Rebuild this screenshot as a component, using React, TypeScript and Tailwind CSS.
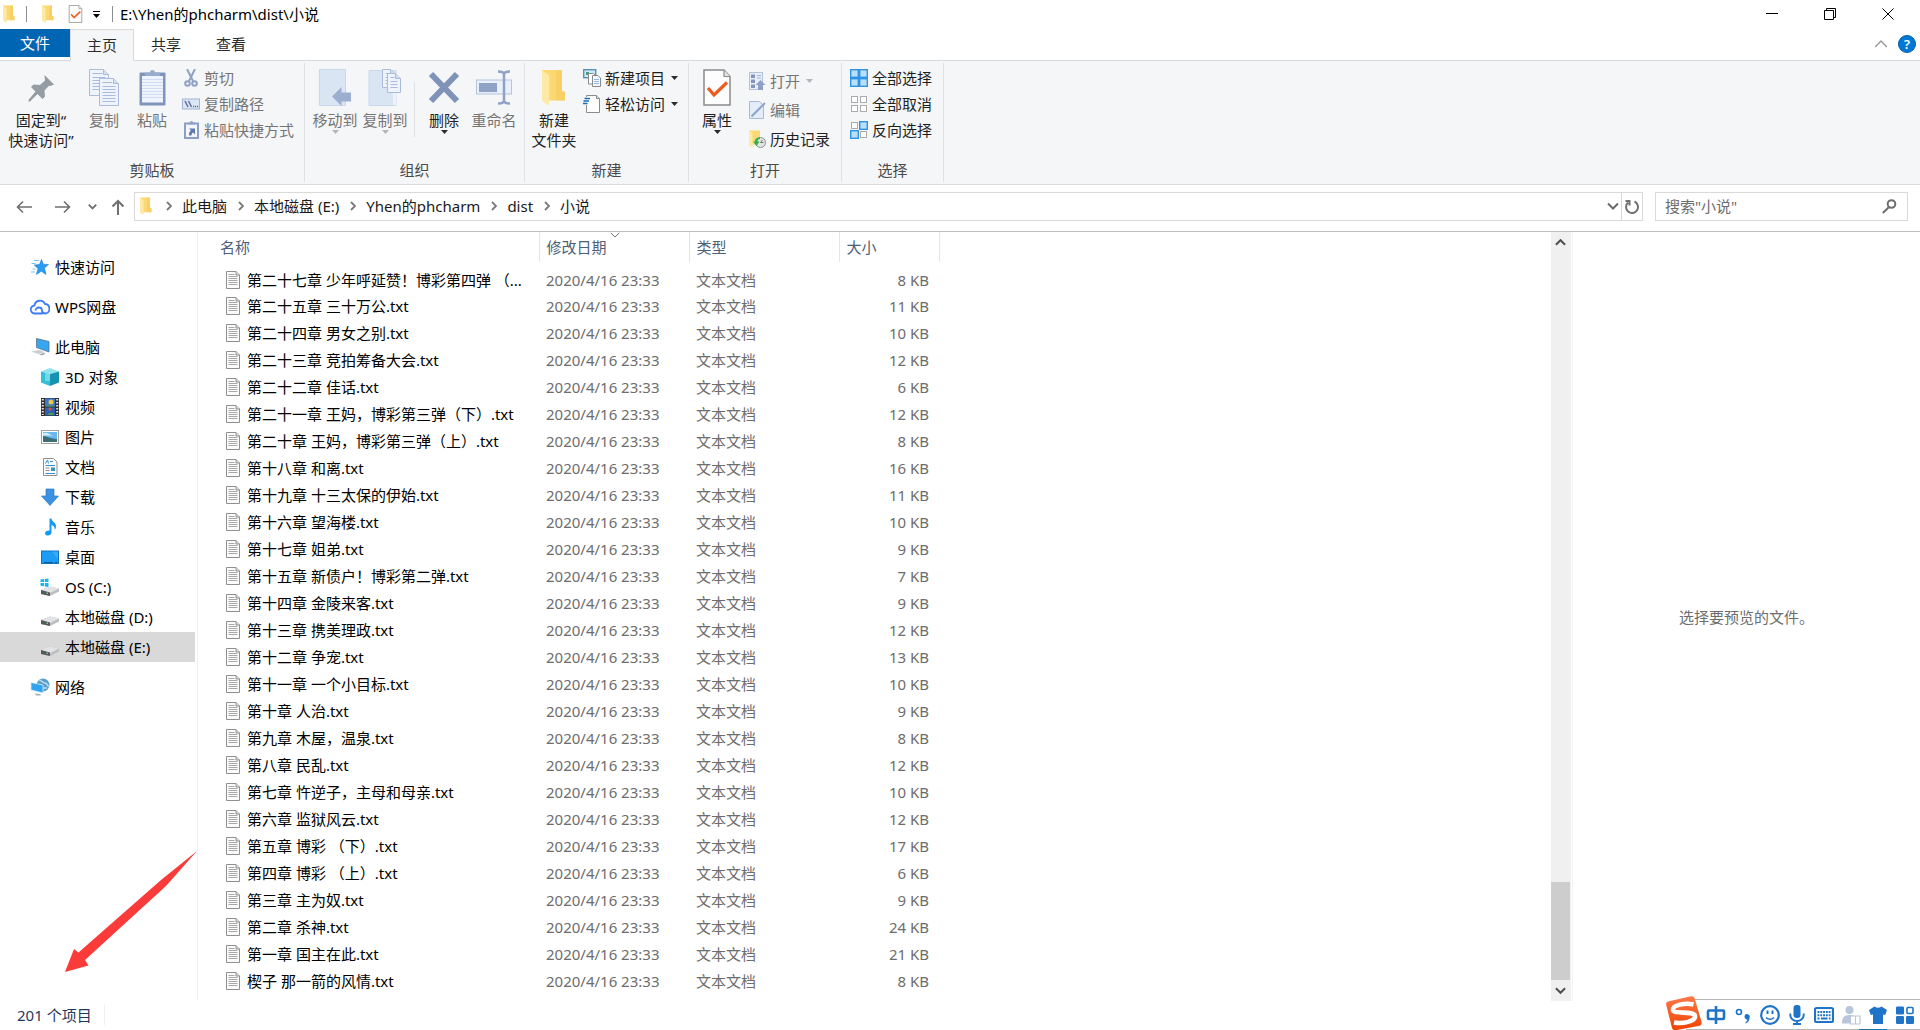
import React from "react";

type IconProps = { className?: string };

const files: [string, string][] = [
  ["第二十七章 少年呼延赞！博彩第四弹 （...", "8 KB"],
  ["第二十五章 三十万公.txt", "11 KB"],
  ["第二十四章 男女之别.txt", "10 KB"],
  ["第二十三章 竞拍筹备大会.txt", "12 KB"],
  ["第二十二章 佳话.txt", "6 KB"],
  ["第二十一章 王妈，博彩第三弹（下）.txt", "12 KB"],
  ["第二十章 王妈，博彩第三弹（上）.txt", "8 KB"],
  ["第十八章 和离.txt", "16 KB"],
  ["第十九章 十三太保的伊始.txt", "11 KB"],
  ["第十六章 望海楼.txt", "10 KB"],
  ["第十七章 姐弟.txt", "9 KB"],
  ["第十五章 新债户！博彩第二弹.txt", "7 KB"],
  ["第十四章 金陵来客.txt", "9 KB"],
  ["第十三章 携美理政.txt", "12 KB"],
  ["第十二章 争宠.txt", "13 KB"],
  ["第十一章 一个小目标.txt", "10 KB"],
  ["第十章 人治.txt", "9 KB"],
  ["第九章 木屋，温泉.txt", "8 KB"],
  ["第八章 民乱.txt", "12 KB"],
  ["第七章 忤逆子，主母和母亲.txt", "10 KB"],
  ["第六章 监狱风云.txt", "12 KB"],
  ["第五章 博彩 （下）.txt", "17 KB"],
  ["第四章 博彩 （上）.txt", "6 KB"],
  ["第三章 主为奴.txt", "9 KB"],
  ["第二章 杀神.txt", "24 KB"],
  ["第一章 国主在此.txt", "21 KB"],
  ["楔子 那一箭的风情.txt", "8 KB"],
];

/* ---------- icons ---------- */

function Folder({ className }: IconProps) {
  return (
    <svg className={className} viewBox="0 0 12 18" preserveAspectRatio="none" aria-hidden="true">
      <path d="M0 0.500h10v10l1.500 0.800v4H0z" fill="#fbd874" />
      <path d="M7 0.500h3v10l1.500 0.800v4H7z" fill="#f6cb5b" opacity="0.600" />
      <path d="M0 0.500L3.600 3.200V18L0 15.500z" fill="#ffe9a6" />
    </svg>
  );
}

function CheckDoc({ className }: IconProps) {
  return (
    <svg className={className} viewBox="0 0 28 37" aria-hidden="true">
      <path d="M1 1h20l6 6.500v28.500H1z" fill="#fdfdfd" stroke="#8a8a8a" strokeWidth="1.500" />
      <path d="M21 1v6.500h6" fill="#e5e5e5" stroke="#8a8a8a" strokeWidth="1.200" />
      <path d="M5 19l6 7L24 13.500" fill="none" stroke="#ee5a1c" strokeWidth="3.200" />
    </svg>
  );
}

function Pin() {
  return (
    <svg className="h-[37px] w-7" viewBox="0 0 28 37" aria-hidden="true">
      <path d="M17.500 6L27 15.500l-3.500 1.500-1.500-0.300-4.500 4.800 0.500 6-2.500 2.500-5-5L3 32.500H1.500V31L8.500 22.500 4 18l2.500-2.500 6.500 0.500L18 11.500z" fill="#949da3" />
    </svg>
  );
}

function PageShape({ x, y, w, h }: { x: number; y: number; w: number; h: number }) {
  const lines = [];
  for (let ly = y + 8; ly < y + h - 3; ly += 3) lines.push(ly);
  return (
    <g>
      <path d={`M${x} ${y}h${w - 5}l5 5v${h - 5}h-${w}z`} fill="#eef3fc" stroke="#aabbdc" />
      <path d={`M${x + w - 5} ${y}v5h5`} fill="#d6e0f2" stroke="#aabbdc" />
      <path d={`M${x + 3} ${y + 4}h${w - 9}`} stroke="#a9bbe0" />
      {lines.map((ly) => (
        <path key={ly} d={`M${x + 3} ${ly}h${w - 6}`} stroke="#a9bbe0" />
      ))}
    </g>
  );
}

function CopyIcon() {
  return (
    <svg className="h-[37px] w-[31px]" viewBox="0 0 31 37" aria-hidden="true">
      <PageShape x={0.5} y={0.5} w={19} h={26} />
      <PageShape x={10.5} y={9.5} w={19} h={27} />
    </svg>
  );
}

function Clipboard({ className }: IconProps) {
  return (
    <svg className={className} viewBox="0 0 27 37" aria-hidden="true">
      <rect x="0.500" y="3.500" width="26" height="33" rx="1" fill="#8093bb" />
      <rect x="3" y="7" width="21" height="26.500" fill="#eef3fc" />
      <path d="M3 10.500h21M3 13.500h21M3 16.500h21M3 19.500h21M3 22.500h21M3 25.500h21M3 28.500h21" stroke="#cfdcf2" />
      <path d="M6 7V3.500h5a2.500 2.500 0 0 1 5 0h5V7z" fill="#9aabcd" />
    </svg>
  );
}

function CutIcon() {
  return (
    <svg className="h-[18px] w-[18px]" viewBox="0 0 18 18" fill="none" stroke="#8fa1c4" aria-hidden="true">
      <path d="M5 0L11 12M13 0L7 12" strokeWidth="2" />
      <circle cx="5.500" cy="14.500" r="2.300" strokeWidth="2" />
      <circle cx="12.500" cy="14.500" r="2.300" strokeWidth="2" />
    </svg>
  );
}

function PathIcon() {
  return (
    <svg className="h-[18px] w-[18px]" viewBox="0 0 18 18" aria-hidden="true">
      <rect x="0.500" y="4" width="17" height="10" fill="#dce6f6" stroke="#a3b3d3" />
      <path d="M3 6l3 6M6.500 6l3 6" stroke="#5f7397" strokeWidth="1.500" />
      <path d="M11 11.500h1.200M13 11.500h1.200M15 11.500h1.200" stroke="#5f7397" strokeWidth="1.500" />
    </svg>
  );
}

function PasteShortcut() {
  return (
    <svg className="h-[18px] w-[18px]" viewBox="0 0 18 18" aria-hidden="true">
      <rect x="3" y="2.500" width="13" height="14.500" fill="#f3f7fd" stroke="#8b9fc6" strokeWidth="2" />
      <path d="M6 3.500V1.500h2a1.500 1.500 0 0 1 3 0h2v2z" fill="#8fa1c4" />
      <path d="M7 14.500c0-3 0.500-4 2-5L7 7.500h6v6l-2-2c-1 0.500-1.500 1.500-1.500 3z" fill="#6279a8" />
    </svg>
  );
}

function MoveTo() {
  return (
    <svg className="h-[37px] w-8" viewBox="0 0 32 37" aria-hidden="true">
      <path d="M0.500 0.500h26v36h-26z" fill="#dae5f4" stroke="#cbd7ea" />
      <path d="M13 27.500L22.500 18v5.500H32v9h-9.500V37z" fill="#9dafd0" />
    </svg>
  );
}

function CopyTo() {
  return (
    <svg className="h-[37px] w-[34px]" viewBox="0 0 34 37" aria-hidden="true">
      <path d="M1 1.500h27v35H1z" fill="#dae5f4" stroke="#cbd7ea" />
      <path d="M25 22v14h3V24z" fill="#eef3fa" />
      <PageShape x={14.5} y={0.5} w={13} h={18} />
      <PageShape x={19.5} y={4.5} w={13} h={19} />
    </svg>
  );
}

function DeleteIcon() {
  return (
    <svg className="h-[37px] w-8" viewBox="0 0 32 37" aria-hidden="true">
      <path d="M3 5L29 32M29 5L3 32" stroke="#7f93b9" strokeWidth="6" />
    </svg>
  );
}

function RenameIcon() {
  return (
    <svg className="h-[37px] w-[37px]" viewBox="0 0 37 37" aria-hidden="true">
      <rect x="0.500" y="11" width="35" height="14" fill="#eaf0fa" stroke="#b4c3df" />
      <rect x="3" y="14" width="18" height="9" fill="#8fa3c7" />
      <path d="M22 2.500c4 0 6 0.500 6 3v26c0 2.500-2 3-6 3M34 2.500c-4 0-6 0.500-6 3v26c0 2.500 2 3 6 3" fill="none" stroke="#8fa1c4" strokeWidth="2.500" />
    </svg>
  );
}

function NewItem() {
  return (
    <svg className="h-[18px] w-[18px]" viewBox="0 0 18 18" aria-hidden="true">
      <rect x="0.700" y="0.700" width="12" height="8" fill="#cfe9fa" stroke="#5690b4" strokeWidth="1.400" />
      <rect x="3" y="3" width="3" height="3" fill="#3f9f7a" />
      <path d="M5.500 4.500h5l2.500 2.500v8H5.500z" fill="#fff" stroke="#8a8a8a" />
      <path d="M9.500 6.500h5.500l2.500 2.500v8.500H9.500z" fill="#f4f9ff" stroke="#8a8a8a" />
      <path d="M11 10.500h5M11 12.500h5M11 14.500h5" stroke="#8db8ea" />
    </svg>
  );
}

function EasyAccess() {
  return (
    <svg className="h-[18px] w-[18px]" viewBox="0 0 18 18" aria-hidden="true">
      <path d="M3.500 0.500h10l3 3V17.500H3.500z" fill="#fff" stroke="#8a8a8a" />
      <path d="M13.500 0.500v3h3" fill="#ddd" stroke="#8a8a8a" />
      <rect x="0" y="2" width="5" height="8" fill="#f5f6f8" />
      <path d="M1.500 3.500H7M0.500 6H6M0 8.500H4.500" stroke="#1b6db8" strokeWidth="1.400" />
    </svg>
  );
}

function OpenIcon() {
  return (
    <svg className="h-[18px] w-[18px]" viewBox="0 0 18 18" aria-hidden="true">
      <rect x="1.500" y="0.500" width="13" height="17" fill="#e9eff9" stroke="#b4c2dc" />
      <path d="M3 2.500h4v3.500H3zM3 7.500h4V11H3zM3 12.500h4V16H3z" fill="#8296bd" />
      <path d="M9 3.500h4M9 6h4" stroke="#9fb0d0" />
      <path d="M12.500 8l5 5h-2.500v5h-5v-5H7.500z" fill="#8da0c5" />
    </svg>
  );
}

function EditIcon() {
  return (
    <svg className="h-[18px] w-[18px]" viewBox="0 0 18 18" aria-hidden="true">
      <path d="M1.500 0.500h10l4 4v13h-14z" fill="#e3ecf9" stroke="#a9bad9" />
      <path d="M3.500 15.500L17 2" stroke="#8ea3cb" strokeWidth="2" />
    </svg>
  );
}

function HistoryIcon() {
  return (
    <svg className="h-[18px] w-[18px]" viewBox="0 0 18 18" aria-hidden="true">
      <path d="M1 0.500h11v14H1z" fill="#fbd874" />
      <path d="M1 0.500l3.500 2.500V18L1 15.500z" fill="#ffe9a6" />
      <circle cx="12.500" cy="12.500" r="5" fill="#e3e3e3" stroke="#909090" />
      <path d="M14.500 10l-2 2.500h3" fill="none" stroke="#777" />
      <path d="M12 7.500c-4 0-5 2-5 4H5l3.500 4.500 3-4.500H9.500c0-1.500 0.500-2.500 2.500-2.500z" fill="#2fb14c" />
    </svg>
  );
}

function SelectIcon({ on }: { on: boolean[] }) {
  const cells = [[1, 1], [10, 1], [1, 10], [10, 10]];
  return (
    <svg className="h-[18px] w-[18px]" viewBox="0 0 18 18" aria-hidden="true">
      {cells.map(([x, y], i) =>
        on[i] ? (
          <rect key={i} x={x - 0.3} y={y - 0.3} width="7.600" height="7.600" fill="#b9dffb" stroke="#2f93e4" strokeWidth="1.400" />
        ) : (
          <rect key={i} x={x + 0.5} y={y + 0.5} width="6" height="6" fill="#fff" stroke="#ababab" />
        ),
      )}
    </svg>
  );
}

function TextFile() {
  return (
    <svg className="h-[18px] w-[14px] shrink-0" viewBox="0 0 14 18" aria-hidden="true">
      <path d="M0.500 0.500h9.500l3.500 3.500v13.500h-13z" fill="#fbfbfb" stroke="#8f8f8f" />
      <path d="M10 0.500v3.500h3.500" fill="#ddd" stroke="#8f8f8f" />
      <path d="M2.500 3.500h6M2.500 5.500h9M2.500 7.500h9M2.500 9.500h9M2.500 11.500h9M2.500 13.500h9" stroke="#a8a8a8" />
    </svg>
  );
}

function Chevron({ d, className, width = 1.5 }: { d: "up" | "down" | "right"; className: string; width?: number }) {
  const path = d === "up" ? "M1 8.500L6 3.500l5 5" : d === "down" ? "M1 3.500L6 8.500l5-5" : "M4 2l4 4-4 4";
  return (
    <svg className={className} viewBox="0 0 12 12" fill="none" stroke="currentColor" strokeWidth={width} aria-hidden="true">
      <path d={path} />
    </svg>
  );
}

function Caret({ className = "text-[#2b2b2b]" }: IconProps) {
  return (
    <svg className={`h-1 w-[7px] ${className}`} viewBox="0 0 7 4" aria-hidden="true">
      <path d="M0 0h7L3.500 4z" fill="currentColor" />
    </svg>
  );
}

function NavIcon({ kind }: { kind: string }) {
  return (
    <svg className="h-[18px] w-5 shrink-0" viewBox="0 0 20 18" aria-hidden="true">
      {kind === "star" && (
        <>
          <path d="M11.500 1.500l1.800 4.700 5.200 0.300-4 3.600 1.500 6.400-4.700-3.200-5 3.200 1.800-5.800-3.800-3.700 5.200-0.500z" fill="#2b9af0" stroke="#1d7fd0" strokeWidth="0.600" />
          <path d="M4 2.500h5M1.500 5.500h4M2.500 11h3M1 14h4" stroke="#7cc3f5" strokeWidth="1.200" />
        </>
      )}
      {kind === "cloud" && (
        <path d="M12.500 15.500H5A4 4 0 0 1 4.500 7.500 5.500 5.500 0 0 1 15 6a4.800 4.800 0 0 1 0.500 9.500c-3 0-3.500-1.500-3.500-3s-1-3-3-3-3.500 1.500-3.500 3" fill="none" stroke="#3d7cf5" strokeWidth="1.800" />
      )}
      {kind === "pc" && (
        <>
          <path d="M6.500 0.500l12.500 3v10.500L6.500 9.500z" fill="#35a6ef" stroke="#5b7288" strokeWidth="0.800" />
          <path d="M1 13.500l8-1.500 5.500 2-6 2z" fill="#c9ced2" />
          <path d="M9 16.500l5-2 1.500 1.500-4 1.500z" fill="#aab0b5" />
        </>
      )}
      {kind === "cube" && (
        <>
          <path d="M10 0l9 3.500L10 6 1 3.500z" fill="#8fe3ef" />
          <path d="M1 3.500L10 6v12L1 14.500z" fill="#35bfd6" />
          <path d="M19 3.500L10 6v12l9-3.500z" fill="#1494b0" />
          <path d="M5 5h5v8H5z" fill="#9de8f2" opacity="0.600" />
        </>
      )}
      {kind === "video" && (
        <>
          <rect x="1" width="18" height="18" fill="#2f2f2f" />
          <path d="M2.800 1v16M17.200 1v16" stroke="#e4e4e4" strokeWidth="2" strokeDasharray="1.500 1.500" />
          <rect x="5" y="0.500" width="10" height="8" fill="#3a77d2" />
          <rect x="5" y="9.500" width="10" height="8" fill="#315fb5" />
          <circle cx="11" cy="4" r="2.500" fill="#f0c53c" />
          <path d="M6 8.500c1-3 3-2 4-1s3-1 5 1zM8 17c0-3 6-3 6 0z" fill="#4d9c48" />
          <circle cx="10" cy="11" r="1.500" fill="#e3532f" />
        </>
      )}
      {kind === "picture" && (
        <>
          <rect x="1.500" y="2.500" width="17" height="13" fill="#fff" stroke="#a0a0a0" />
          <rect x="3" y="4" width="14" height="10" fill="#6bb8ef" />
          <path d="M3 8c4 0 8 3 14 3v3H3z" fill="#3a6f76" />
          <path d="M3 5.500c4-2 6 1 10 2H3z" fill="#d8effc" />
        </>
      )}
      {kind === "doc" && (
        <>
          <path d="M3.500 0.500h10l3.500 3.500v13.500H3.500z" fill="#fbfbfb" stroke="#8f8f8f" />
          <path d="M5.500 5.500l2-3.500 1 3.500M10 3.500h3M5.500 7.500h9.500M5.500 15.500h9.500" fill="none" stroke="#2d93d8" />
          <path d="M5.500 10h4M5.500 12.500h4" stroke="#8f8f8f" />
          <rect x="11" y="9.500" width="4" height="3.500" fill="#3f8fbd" />
        </>
      )}
      {kind === "download" && <path d="M6 1h8v7h4.500L10 17.500 1.500 8H6z" fill="#3b92e0" stroke="#2b7cc6" strokeWidth="0.700" />}
      {kind === "music" && (
        <path d="M9.500 0.500h2c0.500 3.500 4.500 4 4.500 7.500 0 1.500-0.500 3-1.200 4 0-3-1.300-4.500-3.300-5v7.500c0 2-1.800 3-3.500 3s-3-0.800-3-2.300 2-3 4.500-2.700z" fill="#159bf3" />
      )}
      {kind === "desktop" && (
        <>
          <rect x="1.500" y="3" width="17" height="12.500" fill="#1d9cf5" stroke="#1473bd" />
          <path d="M12 3.500h6v8z" fill="#4bb5fa" opacity="0.600" />
          <path d="M4 14.500h9M15 14.500h2" stroke="#0e5c9c" />
        </>
      )}
      {(kind === "disk" || kind === "os") && (
        <>
          <path d="M1 12l9-3.500 9 2v3l-9 4.500-9-2z" fill="#bdbec2" />
          <path d="M1 12l9-3.500 9 2-9 4.500z" fill="#e2e3e6" />
          <path d="M1 12l9 2.500V18l-9-2z" fill="#55585c" />
          <rect x="6.500" y="14.500" width="1.500" height="1.500" fill="#5de06d" />
        </>
      )}
      {kind === "os" && (
        <>
          <path d="M0 0h9.500v9H0z" fill="#fff" />
          <path d="M0.500 1.500L4 1v3H0.500zM4.800 0.900L8.500 0.400V4H4.800zM0.500 5H4v3.200L0.500 7.700zM4.800 5H8.500v4l-3.700-0.500z" fill="#1ab5f1" />
        </>
      )}
      {kind === "network" && (
        <>
          <circle cx="13" cy="7" r="6.500" fill="#5a9fc9" />
          <path d="M9 2c3 0 3 3 6 3s2 4 4 3M11 12c1-3 4-2 6-2" stroke="#b8dcef" strokeWidth="1.500" fill="none" />
          <path d="M1 4.500l12 2.500v8L1 12z" fill="#2fa4f0" stroke="#e9f4fb" strokeWidth="0.700" />
          <path d="M5 15.500l5 0.500 1 1.500H6z" fill="#a9b0b5" />
        </>
      )}
    </svg>
  );
}

/* ---------- ribbon parts ---------- */

function Group({ label, children }: { label: string; children: React.ReactNode }) {
  return (
    <section className="mt-[2px] mb-[2px] flex flex-col border-r border-[#dfe1e4]">
      <div className="flex flex-1">{children}</div>
      <h2 className="pb-[2px] text-center leading-5 text-[#4a4a4a]">{label}</h2>
    </section>
  );
}

function Big({ icon, lines, width, muted, caret }: { icon: React.ReactNode; lines: string[]; width: string; muted?: boolean; caret?: boolean }) {
  return (
    <button type="button" className={`flex flex-col items-center pt-[6px] ${width} ${muted ? "text-[#757575]" : "text-[#1f1f1f]"}`}>
      {icon}
      <span className="mt-1 flex flex-col items-center leading-5 whitespace-nowrap">
        {lines.map((l) => (
          <span key={l}>{l}</span>
        ))}
      </span>
      {caret && <Caret className={muted ? "text-[#b5b5b5]" : "text-[#2b2b2b]"} />}
    </button>
  );
}

function Small({ icon, label, muted, caret }: { icon: React.ReactNode; label: string; muted?: boolean; caret?: boolean }) {
  return (
    <button type="button" className={`flex items-center gap-1 leading-5 whitespace-nowrap ${muted ? "text-[#757575]" : "text-[#1f1f1f]"}`}>
      {icon}
      <span>{label}</span>
      {caret && (
        <span className="ml-[2px]">
          <Caret className={muted ? "text-[#b5b5b5]" : "text-[#2b2b2b]"} />
        </span>
      )}
    </button>
  );
}

function Ribbon() {
  return (
    <div className="flex h-[125px] border-y border-[#d9dadc] bg-[#f5f6f8]">
      <Group label="剪贴板">
        <Big icon={<Pin />} lines={["固定到“", "快速访问”"]} width="w-[82px]" />
        <Big icon={<CopyIcon />} lines={["复制"]} width="w-11" muted />
        <Big icon={<Clipboard className="h-[37px] w-[27px]" />} lines={["粘贴"]} width="w-[52px]" muted />
        <div className="flex flex-col gap-[6px] pt-[5px] pr-[10px] pl-1">
          <Small icon={<CutIcon />} label="剪切" muted />
          <Small icon={<PathIcon />} label="复制路径" muted />
          <Small icon={<PasteShortcut />} label="粘贴快捷方式" muted />
        </div>
      </Group>
      <Group label="组织">
        <div className="flex px-[5px]">
          <Big icon={<MoveTo />} lines={["移动到"]} width="w-[50px]" muted caret />
          <Big icon={<CopyTo />} lines={["复制到"]} width="w-[50px]" muted caret />
          <div className="mx-1 mt-[19px] h-[55px] w-px bg-[#dfe1e4]" />
          <Big icon={<DeleteIcon />} lines={["删除"]} width="w-[50px]" caret />
          <Big icon={<RenameIcon />} lines={["重命名"]} width="w-[50px]" muted />
        </div>
      </Group>
      <Group label="新建">
        <Big icon={<Folder className="h-[37px] w-6" />} lines={["新建", "文件夹"]} width="w-[58px]" />
        <div className="flex flex-col gap-[6px] pt-[5px] pr-[10px]">
          <Small icon={<NewItem />} label="新建项目" caret />
          <Small icon={<EasyAccess />} label="轻松访问" caret />
        </div>
      </Group>
      <Group label="打开">
        <Big icon={<CheckDoc className="h-[37px] w-7" />} lines={["属性"]} width="w-[56px]" caret />
        <div className="flex flex-col gap-[9px] pt-[8px] pr-[11px] pl-[3px]">
          <Small icon={<OpenIcon />} label="打开" muted caret />
          <Small icon={<EditIcon />} label="编辑" muted />
          <Small icon={<HistoryIcon />} label="历史记录" />
        </div>
      </Group>
      <Group label="选择">
        <div className="flex flex-col gap-[6px] pt-[5px] pr-[11px] pl-2">
          <Small icon={<SelectIcon on={[true, true, true, true]} />} label="全部选择" />
          <Small icon={<SelectIcon on={[false, false, false, false]} />} label="全部取消" />
          <Small icon={<SelectIcon on={[false, true, true, false]} />} label="反向选择" />
        </div>
      </Group>
    </div>
  );
}

/* ---------- page regions ---------- */

function TitleBar() {
  return (
    <header className="flex h-[29px] items-center pb-px pl-[3px]">
      <Folder className="h-[18px] w-3" />
      <span className="mx-[11px] h-4 w-px bg-[#8c8c8c]" />
      <button type="button" aria-label="新建文件夹" className="ml-1">
        <Folder className="h-[18px] w-3" />
      </button>
      <button type="button" aria-label="属性" className="ml-[14px]">
        <CheckDoc className="h-[18px] w-[15px]" />
      </button>
      <button type="button" aria-label="自定义快速访问工具栏" className="ml-[10px] flex flex-col items-center gap-[2px]">
        <span className="h-px w-[7px] bg-black" />
        <Caret className="text-black" />
      </button>
      <span className="mr-[7px] ml-3 h-4 w-px bg-[#8c8c8c]" />
      <h1 className="leading-5 text-black">E:\Yhen的phcharm\dist\小说</h1>
      <div className="mr-[26px] ml-auto flex items-center gap-[46px]">
        <button type="button" aria-label="最小化">
          <svg className="h-3 w-3" viewBox="0 0 12 12"><path d="M0 5.500h12" stroke="#000" /></svg>
        </button>
        <button type="button" aria-label="向下还原">
          <svg className="h-3 w-3" viewBox="0 0 12 12" fill="none" stroke="#000"><path d="M0.500 2.500h9v9h-9zM2.500 2.500v-2h9v9h-2" /></svg>
        </button>
        <button type="button" aria-label="关闭">
          <svg className="h-3 w-3" viewBox="0 0 12 12" fill="none" stroke="#000"><path d="M0.500 0.500l11 11M11.500 0.500l-11 11" /></svg>
        </button>
      </div>
    </header>
  );
}

function Tabs() {
  return (
    <nav className="z-10 -mb-px flex h-8 items-start text-[#2b2b2b]">
      <button type="button" className="h-7 w-[70px] bg-[#0066b4] text-white">文件</button>
      <button type="button" className="h-8 w-16 border border-b-0 border-[#d9dadc] bg-[#f5f6f8] pb-[2px]">主页</button>
      <button type="button" className="h-[30px] w-16">共享</button>
      <button type="button" className="h-[30px] w-[66px]">查看</button>
      <div className="mt-[6px] mr-1 ml-auto flex items-center gap-[10px]">
        <button type="button" aria-label="最小化功能区">
          <Chevron d="up" className="h-[14px] w-[14px] text-[#9a9a9a]" width={1.2} />
        </button>
        <button type="button" aria-label="帮助" className="flex h-[18px] w-[18px] items-center justify-center rounded-full border border-[#0a5ca8] bg-[#0078d7] text-[13px] leading-4 font-semibold text-white">
          ?
        </button>
      </div>
    </nav>
  );
}

function AddressBar() {
  const crumbs = ["此电脑", "本地磁盘 (E:)", "Yhen的phcharm", "dist", "小说"];
  return (
    <div className="flex h-[47px] shrink-0 items-start border-b border-[#bfbfbf] pt-[7px] pr-3 text-[#1a1a1a]">
      <div className="flex h-[29px] w-[134px] items-center pl-4 text-[#6f6f6f]">
        <button type="button" aria-label="后退">
          <svg className="h-4 w-4" viewBox="0 0 16 16" fill="none" stroke="currentColor" strokeWidth="1.600"><path d="M16 8H1.500M7 2.500L1.500 8 7 13.500" /></svg>
        </button>
        <button type="button" aria-label="前进" className="ml-[23px]">
          <svg className="h-4 w-4" viewBox="0 0 16 16" fill="none" stroke="currentColor" strokeWidth="1.600"><path d="M0 8h14.500M9 2.500L14.500 8 9 13.500" /></svg>
        </button>
        <button type="button" aria-label="最近浏览的位置" className="ml-[17px]">
          <Chevron d="down" className="h-[9px] w-[9px]" width={2.4} />
        </button>
        <button type="button" aria-label="上移" className="ml-[13px]">
          <svg className="h-4 w-4" viewBox="0 0 16 16" fill="none" stroke="currentColor" strokeWidth="2"><path d="M8 16V2M2.500 7.500L8 2l5.500 5.500" /></svg>
        </button>
      </div>
      <div className="flex h-[29px] flex-1 items-center border border-[#d9d9d9] pb-px pl-[5px]">
        <Folder className="mr-[11px] h-[18px] w-3" />
        {crumbs.map((c) => (
          <React.Fragment key={c}>
            <Chevron d="right" className="h-3 w-3 text-[#7a7a7a]" width={1.8} />
            <a href="#" className="mr-2 ml-[7px] whitespace-nowrap">{c}</a>
          </React.Fragment>
        ))}
        <button type="button" aria-label="以前的位置" className="mr-[2px] ml-auto">
          <Chevron d="down" className="h-3 w-3 text-[#6a6a6a]" width={2} />
        </button>
        <button type="button" aria-label="刷新" className="-mb-px flex h-[27px] w-[21px] items-center justify-center border-l border-[#d9d9d9]">
          <svg className="h-4 w-4" viewBox="0 0 16 16" fill="none" stroke="#707070" strokeWidth="2"><path d="M10.500 2.500A6 6 0 1 1 4 3.500M1.500 2h4v4.500" /></svg>
        </button>
      </div>
      <form className="ml-3 flex h-[29px] w-[253px] items-center border border-[#d9d9d9] pr-[10px] pl-[9px]">
        <input aria-label="搜索" placeholder={'搜索"小说"'} className="min-w-0 flex-1 bg-transparent pb-px outline-none placeholder:text-[#6d6d6d]" />
        <svg className="h-[15px] w-[15px]" viewBox="0 0 15 15" fill="none" stroke="#6d6d6d" strokeWidth="2" aria-hidden="true">
          <circle cx="9.500" cy="5" r="3.800" />
          <path d="M7 8L0.800 14" />
        </svg>
      </form>
    </div>
  );
}

const pcItems: [string, string][] = [
  ["cube", "3D 对象"],
  ["video", "视频"],
  ["picture", "图片"],
  ["doc", "文档"],
  ["download", "下载"],
  ["music", "音乐"],
  ["desktop", "桌面"],
  ["os", "OS (C:)"],
  ["disk", "本地磁盘 (D:)"],
  ["disk", "本地磁盘 (E:)"],
];

function NavItem({ icon, label, nested, selected }: { icon: string; label: string; nested?: boolean; selected?: boolean }) {
  return (
    <a href="#" className={`mr-[2px] flex h-[30px] items-center gap-[5px] text-black ${nested ? "pl-10" : "pl-[30px]"} ${selected ? "bg-[#d9d9d9]" : ""}`}>
      <NavIcon kind={icon} />
      <span>{label}</span>
    </a>
  );
}

function Sidebar() {
  return (
    <aside className="flex w-[198px] shrink-0 flex-col gap-[10px] border-r border-[#f2f2f2] pt-5">
      <NavItem icon="star" label="快速访问" />
      <NavItem icon="cloud" label="WPS网盘" />
      <div>
        <NavItem icon="pc" label="此电脑" />
        {pcItems.map(([icon, label], i) => (
          <NavItem key={label} icon={icon} label={label} nested selected={i === pcItems.length - 1} />
        ))}
      </div>
      <NavItem icon="network" label="网络" />
    </aside>
  );
}

function FileTable() {
  return (
    <div className="min-w-0 flex-1">
      <table className="w-[741px] table-fixed text-left whitespace-nowrap">
        <colgroup>
          <col className="w-[341px]" />
          <col className="w-[150px]" />
          <col className="w-[150px]" />
          <col className="w-[100px]" />
        </colgroup>
        <thead>
          <tr className="h-[33px] text-[#4c607a]">
            <th className="border-r border-[#e5e5e5] p-0 pl-[22px] font-normal">名称</th>
            <th className="relative border-r border-[#e5e5e5] p-0 pl-[7px] font-normal">
              修改日期
              <span className="absolute -top-[2px] left-[70px]">
                <Chevron d="down" className="h-[10px] w-[10px] text-[#6d6d6d]" width={1.2} />
              </span>
            </th>
            <th className="border-r border-[#e5e5e5] p-0 pl-[7px] font-normal">类型</th>
            <th className="border-r border-[#e5e5e5] p-0 pl-[7px] font-normal">大小</th>
          </tr>
        </thead>
        <tbody className="border-t-[6px] border-transparent text-[#6d6d6d]">
          {files.map(([name, size]) => (
            <tr key={name} className="h-[27px]">
              <td className="p-0 pl-[28px] text-black">
                <div className="flex items-center gap-[7px] leading-5">
                  <TextFile />
                  {name}
                </div>
              </td>
              <td className="p-0 pl-[7px] leading-5">2020/4/16 23:33</td>
              <td className="p-0 pl-[7px] leading-5">文本文档</td>
              <td className="p-0 pr-[10px] text-right leading-5">{size}</td>
            </tr>
          ))}
        </tbody>
      </table>
    </div>
  );
}

function Scrollbar() {
  return (
    <div className="flex w-5 shrink-0 flex-col items-center bg-[#f0f0f0] pr-px text-[#505050]">
      <button type="button" aria-label="向上滚动" className="flex h-[21px] items-center">
        <Chevron d="up" className="h-[11px] w-[11px]" width={2.2} />
      </button>
      <div className="mt-auto h-[98px] w-full bg-[#cdcdcd]" />
      <button type="button" aria-label="向下滚动" className="flex h-[21px] items-center">
        <Chevron d="down" className="h-[11px] w-[11px]" width={2.2} />
      </button>
    </div>
  );
}

function InputMethodBar() {
  const blue = "#1f74c8";
  return (
    <div className="absolute right-0 bottom-0 flex h-[34px] items-end">
      <svg className="z-10 -mr-4 h-[34px] w-9" viewBox="0 0 36 34" aria-label="S">
        <defs>
          <linearGradient id="sogou" x1="0" y1="0" x2="0" y2="1">
            <stop offset="0" stopColor="#fb7a4a" />
            <stop offset="1" stopColor="#f04404" />
          </linearGradient>
        </defs>
        <path d="M2 5.500L25 0.300q3-0.600 3.600 2L35.600 26q0.600 3-2 3.800L11 34H8q-1.500 0-2-2L0.200 9q-0.600-3 1.800-3.500z" fill="url(#sogou)" />
        <path d="M27.500 8.500C19 6.500 6.500 9 7 14c0.500 4.500 21.500 0.500 22 6 0.500 5.500-12 8-21 6.500" fill="none" stroke="#fff" strokeWidth="4.600" />
      </svg>
      <div className="flex h-[31px] items-center border-y border-[#b5b5ba] bg-white pr-[5px] pl-5">
        <div className="flex items-center gap-[7px]">
          <button type="button" aria-label="中文输入">
            <svg className="h-5 w-5" viewBox="0 0 20 20" fill="none" stroke={blue} strokeWidth="2.600"><rect x="2" y="5.500" width="16" height="8.500" rx="1" /><path d="M10 1v18" /></svg>
          </button>
          <button type="button" aria-label="中文标点" className="mx-[2px]">
            <svg className="h-5 w-4" viewBox="0 0 16 20"><circle cx="4" cy="7" r="2.500" fill="none" stroke={blue} strokeWidth="1.600" /><path d="M9.500 11.500a2.600 2.600 0 1 1 5 1.200c0 3-1.500 5-4 5.800v-1.300c1.300-0.700 1.800-1.500 1.800-2.700-1.800 0.200-2.800-1.400-2.800-3z" fill={blue} /></svg>
          </button>
          <button type="button" aria-label="表情">
            <svg className="h-5 w-5" viewBox="0 0 20 20" fill="none" stroke={blue}><circle cx="10" cy="10" r="8.800" strokeWidth="2.200" /><path d="M7.500 5.500V9M12.500 5.500V9" strokeWidth="2" /><path d="M6 12.500q4 3.500 8 0" strokeWidth="1.600" /></svg>
          </button>
          <button type="button" aria-label="语音" className="mx-[2px]">
            <svg className="h-5 w-4" viewBox="0 0 16 20"><rect x="4.500" y="0" width="7" height="13" rx="3" fill={blue} /><path d="M1.300 8.500v1.500a6.700 6 0 0 0 13.400 0V8.500M8 16v3M4 19h8" fill="none" stroke={blue} strokeWidth="1.900" /></svg>
          </button>
          <button type="button" aria-label="软键盘">
            <svg className="h-5 w-5" viewBox="0 0 20 20"><rect x="1" y="3" width="18" height="14" rx="1.500" fill="#fff" stroke={blue} strokeWidth="2.200" /><path d="M3.500 7h13M3.500 10.200h13" stroke={blue} strokeWidth="1.900" strokeDasharray="1.900 0.900" /><path d="M3.500 13.500h2M7 13.500h6.500M15 13.500h1.500" stroke={blue} strokeWidth="1.900" /></svg>
          </button>
          <button type="button" aria-label="用户">
            <svg className="h-5 w-5" viewBox="0 0 20 20"><circle cx="8.500" cy="5" r="4" fill="#b9c5da" /><path d="M1 18.500c0-6 2-8.500 7-8.500s6 2 6 4v4.500z" fill="#b9c5da" /><path d="M9.500 11h5v8h-5zM14.500 11h4.500v8h-4.500z" fill="#fff" stroke="#b9c5da" strokeWidth="1.200" /></svg>
          </button>
          <button type="button" aria-label="皮肤">
            <svg className="h-5 w-5" viewBox="0 0 20 20"><path d="M6.500 1.500q3.500 2.500 7 0l5.500 3.500-1.800 5-2.200-0.500V19H5V9.500L2.800 10 1 5z" fill={blue} /></svg>
          </button>
          <button type="button" aria-label="工具箱">
            <svg className="h-5 w-5" viewBox="0 0 20 20" fill={blue}><rect x="1" y="1.500" width="8" height="8" rx="1.300" /><rect x="12" y="2.500" width="6" height="6" rx="1" fill="#fff" stroke={blue} strokeWidth="1.600" /><rect x="1" y="11" width="8" height="8" rx="1.300" /><rect x="11" y="11" width="8" height="8" rx="1.300" /></svg>
          </button>
        </div>
      </div>
      <span className="absolute right-[33px] bottom-0 h-px w-7 bg-[#1f74a8]" />
    </div>
  );
}

export default function App() {
  return (
    <div lang="zh-CN" className="relative flex min-h-screen flex-col overflow-hidden bg-white font-['Noto_Sans','Noto_Sans_CJK_SC',sans-serif] text-[15px] leading-5">
      <TitleBar />
      <Tabs />
      <Ribbon />
      <AddressBar />
      <main className="flex flex-1">
        <Sidebar />
        <FileTable />
        <Scrollbar />
        <section className="ml-px flex w-[348px] shrink-0 items-center justify-center border-l border-[#f2f2f2] text-[#6d6d6d]">
          选择要预览的文件。
        </section>
      </main>
      <footer className="flex h-[29px] shrink-0 items-center pb-[2px] pl-[17px] text-[#1e395b]">
        <span className="border-r border-[#f0f0f0] pr-3">201 个项目</span>
      </footer>
      <svg className="pointer-events-none absolute bottom-[58px] left-[65px] h-[121px] w-[133px]" viewBox="0 0 133 121" aria-hidden="true">
        <path d="M0 121L9 98l4.500 3.500L96 29 132 0 101 35 20 109l3.500 5.500z" fill="#fb3a3a" />
      </svg>
      <InputMethodBar />
    </div>
  );
}
